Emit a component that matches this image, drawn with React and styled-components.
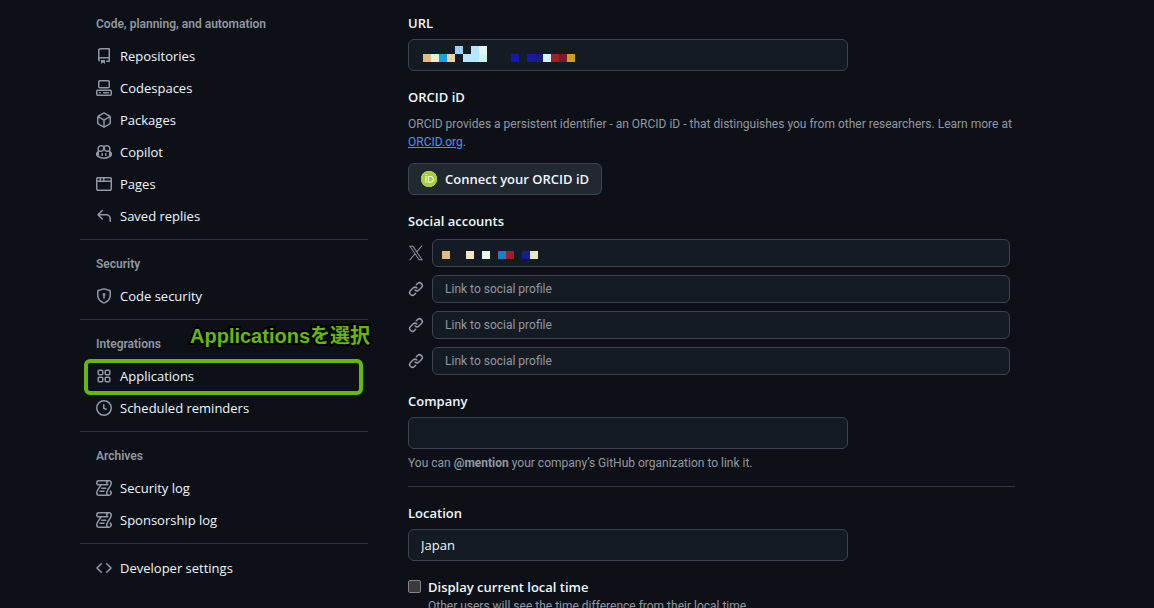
import React from 'react';
import styled, { createGlobalStyle } from 'styled-components';
import { SiOrcid } from 'react-icons/si';

const smallFont = 'Roboto, "Open Sans", sans-serif'

const GlobalStyle = createGlobalStyle`
  * {
    box-sizing: border-box;
  }
  body {
    margin: 0;
    background: #0d1117;
    color: #f0f6fc;
    font-family: "Open Sans", "Noto Sans", sans-serif;
    font-size: 13px;
    line-height: 20px;
  }
`

const Page = styled.div`
  display: flex;
  align-items: flex-start;
  gap: 40px;
  height: 100vh;
  padding: 0 139px 0 80px;
  overflow: hidden;
`

const Sidebar = styled.nav`
  flex: 0 0 288px;
  padding-top: 8px;
`

const NavGroup = styled.section`
  & + & {
    margin-top: 7px;
    padding-top: 8px;
    border-top: 1px solid #2f353d;
  }
`

const NavHeading = styled.h3`
  margin: 0;
  padding: 6px 16px;
  color: #9198a1;
  font-family: ${smallFont};
  font-size: 12px;
  font-weight: 600;
  line-height: 20px;
`

const NavList = styled.ul`
  margin: 0;
  padding: 0;
  list-style: none;
`

const NavItem = styled.li`
  position: relative;
`

const NavLink = styled.a`
  display: flex;
  align-items: center;
  gap: 8px;
  padding: 6px 16px;
  color: #f0f6fc;
  text-decoration: none;
`

const Highlight = styled.div`
  position: absolute;
  inset: -1px 5px -3px 4px;
  border: 4px solid #66b900;
  border-radius: 6px;
  pointer-events: none;
`

const Callout = styled.div`
  position: absolute;
  left: 110px;
  bottom: 100%;
  margin-bottom: 12px;
  color: #66b900;
  font-family: "Liberation Sans", "Noto Sans CJK JP", sans-serif;
  font-size: 20px;
  font-weight: 700;
  line-height: 24px;
  white-space: nowrap;
  -webkit-text-stroke: 4px #000;
  paint-order: stroke fill;
`

const Icon = styled.svg`
  flex: none;
  width: 16px;
  height: 16px;
  fill: #9198a1;
`

const Main = styled.main`
  flex: 1;
  min-width: 0;
  padding-top: 13px;
`

const Field = styled.div`
  margin-bottom: 16px;
`

const Label = styled.label`
  display: block;
  margin-bottom: 6px;
  font-weight: 600;
`

const GroupTitle = styled.h4`
  margin: 0 0 8px;
  font-size: 13px;
  font-weight: 600;
`

const InputWrap = styled.div`
  position: relative;
  flex: 1;
  max-width: ${props => props.$wide ? 'none' : '440px'};
`

const TextInput = styled.input`
  display: block;
  width: 100%;
  height: ${props => props.$small ? '28px' : '32px'};
  padding: 0 12px;
  border: 1px solid #3d444d;
  border-radius: 6px;
  background: #151b23;
  color: #f0f6fc;
  font-family: ${props => props.$small ? smallFont : 'inherit'};
  font-size: ${props => props.$small ? '12px' : '13px'};
  outline: none;

  &::placeholder {
    color: #9198a1;
    opacity: 1;
  }
`

const Mosaic = styled.svg`
  position: absolute;
  left: ${props => props.$left};
  top: ${props => props.$top};
  shape-rendering: crispEdges;
  pointer-events: none;
`

const Note = styled.p`
  margin: 0;
  color: #9198a1;
  font-family: ${smallFont};
  font-size: 12px;
  line-height: 18px;
`

const FieldNote = styled(Note)`
  margin-top: 5px;
`

const Link = styled.a`
  color: #4493f8;
  text-decoration: underline;
`

const Button = styled.button`
  display: flex;
  align-items: center;
  gap: 8px;
  height: 32px;
  margin-top: 12px;
  padding: 0 12px;
  border: 1px solid #3d444d;
  border-radius: 6px;
  background: #212830;
  color: #f0f6fc;
  font-family: inherit;
  font-size: 13px;
  font-weight: 600;
`

const OrcidBadge = styled.span`
  display: flex;
  border-radius: 50%;
  background: #fff;
  color: #a6ce39;
  font-size: 16px;
`

const SocialList = styled.div`
  display: grid;
  gap: 8px;
  padding-right: 5px;
`

const SocialRow = styled.div`
  display: flex;
  align-items: center;
  gap: 8px;
`

const Divider = styled.hr`
  height: 1px;
  margin: 14px 0 16px;
  border: 0;
  background: #2f353d;
`

const CheckRow = styled.div`
  display: flex;
  align-items: flex-start;
  gap: 7px;
`

const Checkbox = styled.input`
  appearance: none;
  flex: none;
  width: 13px;
  height: 13px;
  margin: 3px 0 0;
  border: 1px solid #858585;
  border-radius: 2px;
  background: #3b3b3b;
`

const CheckLabel = styled.label`
  font-weight: 600;
`

const icons = {
  repo: 'M2 2.5A2.5 2.5 0 0 1 4.5 0h8.75a.75.75 0 0 1 .75.75v12.5a.75.75 0 0 1-.75.75h-2.5a.75.75 0 0 1 0-1.5h1.75v-2h-8a1 1 0 0 0-.714 1.7.75.75 0 1 1-1.072 1.05A2.495 2.495 0 0 1 2 11.5Zm10.5-1h-8a1 1 0 0 0-1 1v6.708A2.486 2.486 0 0 1 4.5 9h8ZM5 12.25a.25.25 0 0 1 .25-.25h3.5a.25.25 0 0 1 .25.25v3.25a.25.25 0 0 1-.4.2l-1.45-1.087a.249.249 0 0 0-.3 0L5.4 15.7a.25.25 0 0 1-.4-.2Z',
  codespaces: 'M0 11.25c0-.966.784-1.75 1.75-1.75h12.5c.966 0 1.75.784 1.75 1.75v3A1.75 1.75 0 0 1 14.25 16H1.75A1.75 1.75 0 0 1 0 14.25Zm2-9.5C2 .784 2.784 0 3.75 0h8.5C13.216 0 14 .784 14 1.75v5a1.75 1.75 0 0 1-1.75 1.75h-8.5A1.75 1.75 0 0 1 2 6.75Zm1.75-.25a.25.25 0 0 0-.25.25v5c0 .138.112.25.25.25h8.5a.25.25 0 0 0 .25-.25v-5a.25.25 0 0 0-.25-.25Zm-2 9.5a.25.25 0 0 0-.25.25v3c0 .138.112.25.25.25h12.5a.25.25 0 0 0 .25-.25v-3a.25.25 0 0 0-.25-.25ZM7 12.75a.75.75 0 0 1 .75-.75h4.5a.75.75 0 0 1 0 1.5h-4.5a.75.75 0 0 1-.75-.75Zm-4 0a.75.75 0 0 1 .75-.75h.5a.75.75 0 0 1 0 1.5h-.5a.75.75 0 0 1-.75-.75Z',
  package: 'm8.878.392 5.25 3.045c.54.314.872.89.872 1.514v6.098a1.75 1.75 0 0 1-.872 1.514l-5.25 3.045a1.75 1.75 0 0 1-1.756 0l-5.25-3.045A1.75 1.75 0 0 1 1 11.049V4.951c0-.624.332-1.201.872-1.514L7.122.392a1.75 1.75 0 0 1 1.756 0ZM7.875 1.69l-4.63 2.685L8 7.133l4.755-2.758-4.63-2.685a.248.248 0 0 0-.25 0ZM2.5 5.677v5.372c0 .09.047.171.125.216l4.625 2.683V8.432Zm6.25 8.271 4.625-2.683a.25.25 0 0 0 .125-.216V5.677L8.75 8.432Z',
  copilot: 'M7.998 15.035c-4.562 0-7.873-2.914-7.998-3.749V9.338c.085-.628.677-1.686 1.588-2.065.013-.07.024-.143.036-.218.029-.183.06-.384.126-.612-.201-.508-.254-1.084-.254-1.656 0-.87.128-1.769.693-2.484.579-.733 1.494-1.124 2.724-1.261 1.206-.134 2.262.034 2.944.765.05.053.096.108.139.165.044-.057.094-.112.143-.165.682-.731 1.738-.899 2.944-.765 1.23.137 2.145.528 2.724 1.261.566.715.693 1.614.693 2.484 0 .572-.053 1.148-.254 1.656.066.228.098.429.126.612.012.076.024.148.037.218.924.385 1.522 1.471 1.591 2.095v1.872c0 .766-3.351 3.795-8.002 3.795Zm0-1.485c2.28 0 4.584-1.11 5.002-1.433V7.862l-.023-.116c-.49.21-1.075.291-1.727.291-1.146 0-2.059-.327-2.71-.991A3.222 3.222 0 0 1 8 6.303a3.24 3.24 0 0 1-.544.743c-.65.664-1.563.991-2.71.991-.652 0-1.236-.081-1.727-.291l-.023.116v4.255c.419.323 2.722 1.433 5.002 1.433ZM6.762 2.83c-.193-.206-.637-.413-1.682-.297-1.019.113-1.479.404-1.713.7-.247.312-.369.789-.369 1.554 0 .793.129 1.171.308 1.371.162.181.519.379 1.442.379.853 0 1.339-.235 1.638-.54.315-.322.527-.827.617-1.553.117-.935-.037-1.395-.241-1.614Zm4.155-.297c-1.044-.116-1.488.091-1.681.297-.204.219-.359.679-.242 1.614.091.726.303 1.231.618 1.553.299.305.784.54 1.638.54.922 0 1.28-.198 1.442-.379.179-.2.308-.578.308-1.371 0-.765-.123-1.242-.37-1.554-.233-.296-.693-.587-1.713-.7ZM6.25 9.037a.75.75 0 0 1 .75.75v1.501a.75.75 0 0 1-1.5 0V9.787a.75.75 0 0 1 .75-.75Zm4.25.75v1.501a.75.75 0 0 1-1.5 0V9.787a.75.75 0 0 1 1.5 0Z',
  browser: 'M0 2.75C0 1.784.784 1 1.75 1h12.5c.966 0 1.75.784 1.75 1.75v10.5A1.75 1.75 0 0 1 14.25 15H1.75A1.75 1.75 0 0 1 0 13.25ZM14.5 6h-13v7.25c0 .138.112.25.25.25h12.5a.25.25 0 0 0 .25-.25Zm-6-3.5v2h6V2.75a.25.25 0 0 0-.25-.25ZM5 2.5v2h2v-2Zm-3.25 0a.25.25 0 0 0-.25.25V4.5h2v-2Z',
  reply: 'M6.78 1.97a.75.75 0 0 1 0 1.06L3.81 6h6.44A4.75 4.75 0 0 1 15 10.75v2.5a.75.75 0 0 1-1.5 0v-2.5a3.25 3.25 0 0 0-3.25-3.25H3.81l2.97 2.97a.749.749 0 0 1-.326 1.275.749.749 0 0 1-.734-.215L1.47 7.28a.75.75 0 0 1 0-1.06l4.25-4.25a.75.75 0 0 1 1.06 0Z',
  shield: 'm8.533.133 5.25 1.68A1.75 1.75 0 0 1 15 3.48V7c0 1.566-.32 3.182-1.303 4.682-.983 1.498-2.585 2.813-5.032 3.855a1.697 1.697 0 0 1-1.33 0c-2.447-1.042-4.049-2.357-5.032-3.855C1.32 10.182 1 8.566 1 7V3.48a1.755 1.755 0 0 1 1.217-1.667l5.25-1.68a1.748 1.748 0 0 1 1.066 0Zm-.61 1.429.001.001-5.25 1.68a.251.251 0 0 0-.174.237V7c0 1.36.275 2.666 1.057 3.859.784 1.194 2.121 2.342 4.366 3.298a.196.196 0 0 0 .154 0c2.245-.957 3.582-2.103 4.366-3.297C13.225 9.666 13.5 8.358 13.5 7V3.48a.25.25 0 0 0-.174-.238l-5.25-1.68a.25.25 0 0 0-.153 0ZM9.5 6.5c0 .536-.286 1.032-.75 1.3v2.45a.75.75 0 0 1-1.5 0V7.8A1.5 1.5 0 1 1 9.5 6.5Z',
  apps: 'M1.5 3.25c0-.966.784-1.75 1.75-1.75h2.5c.966 0 1.75.784 1.75 1.75v2.5A1.75 1.75 0 0 1 5.75 7.5h-2.5A1.75 1.75 0 0 1 1.5 5.75Zm7 0c0-.966.784-1.75 1.75-1.75h2.5c.966 0 1.75.784 1.75 1.75v2.5a1.75 1.75 0 0 1-1.75 1.75h-2.5A1.75 1.75 0 0 1 8.5 5.75Zm-7 7c0-.966.784-1.75 1.75-1.75h2.5c.966 0 1.75.784 1.75 1.75v2.5a1.75 1.75 0 0 1-1.75 1.75h-2.5a1.75 1.75 0 0 1-1.75-1.75Zm7 0c0-.966.784-1.75 1.75-1.75h2.5c.966 0 1.75.784 1.75 1.75v2.5a1.75 1.75 0 0 1-1.75 1.75h-2.5a1.75 1.75 0 0 1-1.75-1.75ZM3.25 3a.25.25 0 0 0-.25.25v2.5c0 .138.112.25.25.25h2.5A.25.25 0 0 0 6 5.75v-2.5A.25.25 0 0 0 5.75 3Zm7 0a.25.25 0 0 0-.25.25v2.5c0 .138.112.25.25.25h2.5a.25.25 0 0 0 .25-.25v-2.5a.25.25 0 0 0-.25-.25Zm-7 7a.25.25 0 0 0-.25.25v2.5c0 .138.112.25.25.25h2.5a.25.25 0 0 0 .25-.25v-2.5a.25.25 0 0 0-.25-.25Zm7 0a.25.25 0 0 0-.25.25v2.5c0 .138.112.25.25.25h2.5a.25.25 0 0 0 .25-.25v-2.5a.25.25 0 0 0-.25-.25Z',
  clock: 'M8 0a8 8 0 1 1 0 16A8 8 0 0 1 8 0ZM1.5 8a6.5 6.5 0 1 0 13 0 6.5 6.5 0 0 0-13 0Zm7-3.25v2.992l2.028.812a.75.75 0 0 1-.557 1.392l-2.5-1A.751.751 0 0 1 7 8.25v-3.5a.75.75 0 0 1 1.5 0Z',
  log: 'M5 8.25a.75.75 0 0 1 .75-.75h4a.75.75 0 0 1 0 1.5h-4A.75.75 0 0 1 5 8.25ZM4 10.5A.75.75 0 0 0 4 12h4a.75.75 0 0 0 0-1.5H4ZM13-.005c1.654 0 3 1.328 3 3 0 .982-.338 1.933-.783 2.818-.443.879-1.028 1.758-1.582 2.588l-.011.017c-.568.853-1.104 1.659-1.501 2.446-.398.789-.623 1.494-.623 2.136a1.5 1.5 0 1 0 2.333-1.248.75.75 0 0 1 .834-1.246A3 3 0 0 1 13 16H3a3 3 0 0 1-3-3c0-1.582.891-3.135 1.777-4.506.209-.322.418-.637.623-.946.473-.709.923-1.386 1.287-2.048H2.51c-.576 0-1.381-.133-1.907-.783A2.68 2.68 0 0 1 0 2.995a3 3 0 0 1 3-3Zm0 1.5a1.5 1.5 0 0 0-1.5 1.5c0 .476.223.834.667 1.132A.75.75 0 0 1 11.75 5.5H5.368c-.467 1.003-1.141 2.015-1.773 2.963-.192.289-.381.571-.558.845C2.13 10.711 1.5 11.916 1.5 13A1.5 1.5 0 0 0 3 14.5h7.401A2.989 2.989 0 0 1 10 13c0-.979.338-1.928.784-2.812.441-.874 1.023-1.748 1.575-2.576l.017-.026c.568-.853 1.103-1.658 1.501-2.448.398-.79.623-1.497.623-2.143 0-.838-.669-1.5-1.5-1.5Zm-10 0a1.5 1.5 0 0 0-1.5 1.5c0 .321.1.569.27.778.097.12.325.227.74.227h7.674A2.737 2.737 0 0 1 10 2.995c0-.546.146-1.059.401-1.5Z',
  code: 'm11.28 3.22 4.25 4.25a.75.75 0 0 1 0 1.06l-4.25 4.25a.749.749 0 0 1-1.275-.326.749.749 0 0 1 .215-.734L13.94 8l-3.72-3.72a.749.749 0 0 1 .326-1.275.749.749 0 0 1 .734.215Zm-6.56 0a.751.751 0 0 1 1.042.018.751.751 0 0 1 .018 1.042L2.06 8l3.72 3.72a.749.749 0 0 1-.326 1.275.749.749 0 0 1-.734-.215L.47 8.53a.75.75 0 0 1 0-1.06Z',
  link: 'm7.775 3.275 1.25-1.25a3.5 3.5 0 1 1 4.95 4.95l-2.5 2.5a3.5 3.5 0 0 1-4.95 0 .751.751 0 0 1 .018-1.042.751.751 0 0 1 1.042-.018 1.998 1.998 0 0 0 2.83 0l2.5-2.5a2.002 2.002 0 0 0-2.83-2.83l-1.25 1.25a.751.751 0 0 1-1.042-.018.751.751 0 0 1-.018-1.042Zm-4.69 9.64a1.998 1.998 0 0 0 2.83 0l1.25-1.25a.751.751 0 0 1 1.042.018.751.751 0 0 1 .018 1.042l-1.25 1.25a3.5 3.5 0 1 1-4.95-4.95l2.5-2.5a3.5 3.5 0 0 1 4.95 0 .751.751 0 0 1-.018 1.042.751.751 0 0 1-1.042.018 1.998 1.998 0 0 0-2.83 0l-2.5 2.5a1.998 1.998 0 0 0 0 2.83Z',
}

const groups = [
  {
    title: 'Code, planning, and automation',
    items: [
      { icon: 'repo', text: 'Repositories' },
      { icon: 'codespaces', text: 'Codespaces' },
      { icon: 'package', text: 'Packages' },
      { icon: 'copilot', text: 'Copilot' },
      { icon: 'browser', text: 'Pages' },
      { icon: 'reply', text: 'Saved replies' },
    ],
  },
  {
    title: 'Security',
    items: [{ icon: 'shield', text: 'Code security' }],
  },
  {
    title: 'Integrations',
    items: [
      { icon: 'apps', text: 'Applications', callout: 'Applicationsを選択' },
      { icon: 'clock', text: 'Scheduled reminders' },
    ],
  },
  {
    title: 'Archives',
    items: [
      { icon: 'log', text: 'Security log' },
      { icon: 'log', text: 'Sponsorship log' },
    ],
  },
  {
    items: [{ icon: 'code', text: 'Developer settings' }],
  },
]

// [column, row, colour], one cell is 8px
const urlCells = [
  [0, 1, '#e2ba84'], [1, 1, '#e0f5d8'], [2, 1, '#15a4de'], [3, 1, '#efd0a4'],
  [4, 0, '#9dd1fd'], [5, 1, '#b5e6fd'], [6, 0, '#b5e6fd'], [6, 1, '#b5e6fd'],
  [7, 0, '#e2f5ec'], [7, 1, '#cdf5e9'], [11, 1, '#1519a6'], [13, 1, '#1519a6'],
  [14, 1, '#171d80'], [15, 1, '#cdf7fd'], [16, 1, '#a01f24'], [17, 1, '#7a1d22'],
  [18, 1, '#cca01f'],
]

const socialCells = [
  [0, 0, '#e2ba84'], [3, 0, '#f0e6c4'], [5, 0, '#f0f5ec'], [7, 0, '#1a7fc8'],
  [8, 0, '#a01f24'], [10, 0, '#1519a6'], [11, 0, '#e2e8c4'],
]

const Octicon = ({ name }) => (
  <Icon viewBox="0 0 16 16" aria-hidden="true">
    <path d={icons[name]} />
  </Icon>
)

const XIcon = () => (
  <Icon viewBox="-86 -72 1372 1372" aria-hidden="true">
    <path d="M714.163 519.284L1160.89 0H1055.03L667.137 450.887L357.328 0H0L468.492 681.821L0 1226.37H105.866L515.491 750.218L842.672 1226.37H1200L714.137 519.284H714.163ZM569.165 687.828L521.697 619.934L144.011 79.6944H306.615L611.412 515.685L658.88 583.579L1055.08 1150.3H892.476L569.165 687.854V687.828Z" />
  </Icon>
)

const Redacted = ({ cells, columns, rows, left, top }) => (
  <Mosaic width={columns * 8} height={rows * 8} $left={left} $top={top} aria-hidden="true">
    {cells.map(([x, y, fill]) => (
      <rect key={`${x}-${y}`} x={x * 8} y={y * 8} width="8" height="8" fill={fill} />
    ))}
  </Mosaic>
)

const SettingsNav = () => (
  <Sidebar aria-label="Settings">
    {groups.map((group, i) => (
      <NavGroup key={i}>
        {group.title && <NavHeading>{group.title}</NavHeading>}
        <NavList>
          {group.items.map(item => (
            <NavItem key={item.text}>
              <NavLink href="#">
                <Octicon name={item.icon} />
                {item.text}
              </NavLink>
              {item.callout && <Highlight />}
              {item.callout && <Callout>{item.callout}</Callout>}
            </NavItem>
          ))}
        </NavList>
      </NavGroup>
    ))}
  </Sidebar>
)

const ProfileForm = () => (
  <Main>
    <Field>
      <Label htmlFor="url">URL</Label>
      <InputWrap>
        <TextInput id="url" type="text" />
        <Redacted cells={urlCells} columns={19} rows={2} left="15px" top="7px" />
      </InputWrap>
    </Field>

    <Field>
      <GroupTitle>ORCID iD</GroupTitle>
      <Note>
        ORCID provides a persistent identifier - an ORCID iD - that distinguishes you from other researchers. Learn more at{' '}
        <Link href="#">ORCID.org</Link>.
      </Note>
      <Button type="button">
        <OrcidBadge><SiOrcid /></OrcidBadge>
        Connect your ORCID iD
      </Button>
    </Field>

    <Field>
      <GroupTitle>Social accounts</GroupTitle>
      <SocialList>
        <SocialRow>
          <XIcon />
          <InputWrap $wide>
            <TextInput $small type="text" aria-label="Social profile 1" />
            <Redacted cells={socialCells} columns={12} rows={1} left="10px" top="12px" />
          </InputWrap>
        </SocialRow>
        {[2, 3, 4].map(n => (
          <SocialRow key={n}>
            <Octicon name="link" />
            <InputWrap $wide>
              <TextInput $small type="text" placeholder="Link to social profile" aria-label={`Social profile ${n}`} />
            </InputWrap>
          </SocialRow>
        ))}
      </SocialList>
    </Field>

    <Label htmlFor="company">Company</Label>
    <InputWrap>
      <TextInput id="company" type="text" />
    </InputWrap>
    <FieldNote>
      You can <strong>@mention</strong> your company’s GitHub organization to link it.
    </FieldNote>

    <Divider />

    <Field>
      <Label htmlFor="location">Location</Label>
      <InputWrap>
        <TextInput id="location" type="text" defaultValue="Japan" />
      </InputWrap>
    </Field>

    <CheckRow>
      <Checkbox id="local-time" type="checkbox" />
      <div>
        <CheckLabel htmlFor="local-time">Display current local time</CheckLabel>
        <Note>Other users will see the time difference from their local time.</Note>
      </div>
    </CheckRow>
  </Main>
)

const App = () => (
  <>
    <GlobalStyle />
    <Page>
      <SettingsNav />
      <ProfileForm />
    </Page>
  </>
)

export default App;
